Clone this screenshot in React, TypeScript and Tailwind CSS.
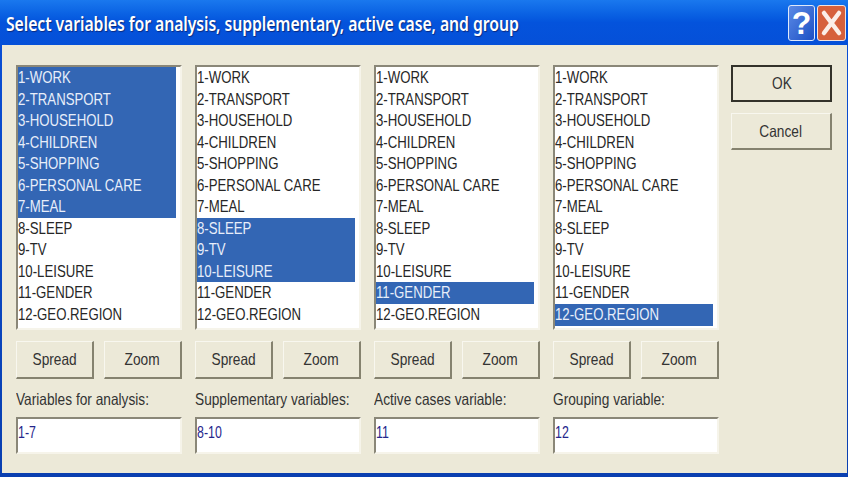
const items = [
  '1-WORK',
  '2-TRANSPORT',
  '3-HOUSEHOLD',
  '4-CHILDREN',
  '5-SHOPPING',
  '6-PERSONAL CARE',
  '7-MEAL',
  '8-SLEEP',
  '9-TV',
  '10-LEISURE',
  '11-GENDER',
  '12-GEO.REGION',
];

const columns = [
  { label: 'Variables for analysis:', value: '1-7', selected: [0, 1, 2, 3, 4, 5, 6] },
  { label: 'Supplementary variables:', value: '8-10', selected: [7, 8, 9] },
  { label: 'Active cases variable:', value: '11', selected: [10] },
  { label: 'Grouping variable:', value: '12', selected: [11] },
];

const sunken =
  'bg-white border-t-2 border-l-2 border-t-[#8a8778] border-l-[#8a8778] border-r-2 border-b-2 border-r-[#f6f4ea] border-b-[#f6f4ea]';

const Btn = ({ label, className }: { label: string; className: string }) => (
  <div
    className={`flex items-center justify-center bg-[#ece9d8] text-[#333] border-t border-l border-t-[#f8f7ef] border-l-[#f8f7ef] border-r-2 border-b-2 border-r-[#85826f] border-b-[#85826f] ${className}`}
  >
    <span className="inline-block scale-x-[0.83] whitespace-nowrap">{label}</span>
  </div>
);

const Column = ({ label, value, selected }: { label: string; value: string; selected: number[] }) => (
  <div className="flex flex-col w-[166px]">
    <div className={`${sunken} h-[265px] w-[166px] overflow-hidden`}>
      {items.map((item, i) => (
        <div
          key={item}
          className={`h-[21.55px] leading-[21.55px] w-[158px] whitespace-nowrap ${
            selected.includes(i) ? 'bg-[#3366b4] text-[#e8eefa]' : 'text-[#262626]'
          }`}
        >
          <span className="inline-block origin-left scale-x-[0.8]">{item}</span>
        </div>
      ))}
    </div>
    <div className="flex justify-between mt-[11px]">
      <Btn label="Spread" className="w-[78px] h-[38px]" />
      <Btn label="Zoom" className="w-[78px] h-[38px]" />
    </div>
    <div className="mt-[10px] h-[20px] leading-[20px] whitespace-nowrap text-[#333]">
      <span className="inline-block origin-left scale-x-[0.83]">{label}</span>
    </div>
    <div className={`${sunken} mt-[8px] h-[37px] pt-[3px] leading-[20px] text-[#26268c]`}>
      <span className="inline-block origin-left scale-x-[0.75]">{value}</span>
    </div>
  </div>
);

export default function App() {
  return (
    <div className="w-[848px] h-[477px] overflow-hidden flex flex-col bg-gradient-to-b from-[#0a50d8] to-[#0a3fb0] text-[16.5px] font-['Liberation_Sans',Arial,sans-serif]">
      {/* title bar */}
      <div className="h-[45px] shrink-0 flex items-center justify-between pl-[6px] pr-[2px] bg-gradient-to-b from-[#1a78ee] via-[#0453dc] to-[#0550d8]">
        <span className="mt-[3px] text-white text-[20px] font-['Noto_Sans',sans-serif] font-semibold tracking-[-0.1px] whitespace-nowrap [text-shadow:1px_1px_1px_#0a2a80] scale-x-[0.79] origin-left">
          Select variables for analysis, supplementary, active case, and group
        </span>
        <div className="flex gap-[2px]">
          <div className="w-[27px] h-[36px] rounded-[3px] border border-[#dfe9fb] bg-gradient-to-br from-[#5b8ae6] to-[#1d4fc4] flex items-center justify-center text-white text-[32px] font-bold">
            ?
          </div>
          <div className="w-[29px] h-[36px] rounded-[3px] border border-[#f2e4de] bg-[#d6603c] flex items-center justify-center">
            <svg width="23" height="28" viewBox="0 0 23 28">
              <path d="M4 4 L19 24 M19 4 L4 24" stroke="#fbeee8" strokeWidth="4.5" strokeLinecap="round" />
            </svg>
          </div>
        </div>
      </div>
      {/* dialog body */}
      <div className="ml-[2px] mr-px h-[428px] bg-[#ece9d8] flex pl-[14px] pt-[20px]">
        <div className="flex gap-[13px]">
          {columns.map(c => (
            <Column key={c.label} {...c} />
          ))}
        </div>
        <div className="ml-[12px] flex flex-col gap-[11px]">
          <Btn label="OK" className="w-[101px] h-[37px] !border-2 !border-[#33322a]" />
          <Btn label="Cancel" className="w-[101px] h-[37px]" />
        </div>
      </div>
    </div>
  );
}
